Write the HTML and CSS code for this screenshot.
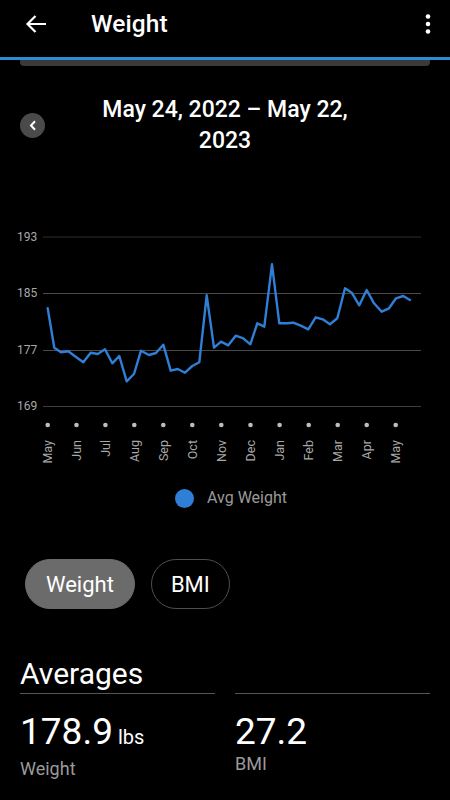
FILE: index.html
```html
<!DOCTYPE html>
<html lang="en">
<head>
<meta charset="utf-8">
<title>Weight</title>
<link rel="stylesheet" href="styles.css">
</head>
<body>
<header class="topbar">
  <svg class="back" width="22" height="20" viewBox="0 0 22 20"><path d="M21 10H2.5M10.5 2L2.5 10L10.5 18" fill="none" stroke="#fff" stroke-width="2.2" stroke-linecap="butt" stroke-linejoin="miter"/></svg>
  <h1 class="title">Weight</h1>
  <svg class="kebab" width="6" height="22" viewBox="0 0 6 22"><circle cx="3" cy="3.5" r="2.3" fill="#fff"/><circle cx="3" cy="11" r="2.3" fill="#fff"/><circle cx="3" cy="18.5" r="2.3" fill="#fff"/></svg>
</header>
<div class="accent"></div>
<div class="tabbar"></div>

<section class="range">
  <button class="prev" aria-label="Previous"><svg width="8" height="11" viewBox="0 0 8 11"><path d="M6 1.2L2 5.5L6 9.8" fill="none" stroke="#fff" stroke-width="2"/></svg></button>
  <div class="range-title">May 24, 2022 – May 22, 2023</div>
  <span></span>
</section>

<svg class="chart" width="450" height="250" viewBox="0 220 450 250">
  <g class="grid">
    <line x1="43" y1="237" x2="421" y2="237" stroke="#2c2c2c" stroke-width="1"/>
    <line x1="43" y1="293.5" x2="421" y2="293.5" stroke="#4a4a4a" stroke-width="1"/>
    <line x1="43" y1="350.5" x2="421" y2="350.5" stroke="#4a4a4a" stroke-width="1"/>
    <line x1="43" y1="406.5" x2="421" y2="406.5" stroke="#3e3e3e" stroke-width="1"/>
  </g>
  <g class="ylabels" font-family="Roboto, sans-serif" font-size="12" fill="#a8a8a8">
    <text x="17" y="241">193</text>
    <text x="17" y="297">185</text>
    <text x="17" y="354">177</text>
    <text x="17" y="410">169</text>
  </g>
  <polyline fill="none" stroke="#2f7fd6" stroke-width="2.4" stroke-linejoin="round" stroke-linecap="round"
    points="47.7,308.3 54.3,347.7 61,352.3 68.3,351.3 76,357 83.3,362.3 90.7,352.7 97.7,354 105,349.3 112.3,363.3 119.3,356 126.7,381.3 134,374 141,350.7 149,355 156,353 163.3,344.7 170.7,370.7 177.7,369 185,372.7 192.3,366 199.3,362.3 206.7,295.3 214,347.7 221,341.7 228.3,345.3 235.7,335.7 243.3,338.3 250.3,344.3 257.3,323.3 264.3,326.7 272,264.3 279.3,323.3 286.7,323.3 293.3,322.7 300.7,325.7 308.3,329.3 315.7,317.3 322.7,319.3 330,324.3 337.3,318.3 345,288.3 351.7,292.7 359.3,305.3 366.7,290 374,303.3 381.7,311.7 389,308.3 396,298.3 403.3,296 410,300"/>
  <g class="dots" fill="#bdbdbd">
    <circle cx="47.7" cy="425" r="2.3"/><circle cx="76.5" cy="425" r="2.3"/><circle cx="105.4" cy="425" r="2.3"/><circle cx="134.3" cy="425" r="2.3"/><circle cx="163.3" cy="425" r="2.3"/><circle cx="192.3" cy="425" r="2.3"/><circle cx="221.3" cy="425" r="2.3"/><circle cx="250.5" cy="425" r="2.3"/><circle cx="279.6" cy="425" r="2.3"/><circle cx="308.7" cy="425" r="2.3"/><circle cx="337.7" cy="425" r="2.3"/><circle cx="366.7" cy="425" r="2.3"/><circle cx="395.7" cy="425" r="2.3"/>
  </g>
  <g class="months" font-family="Roboto, sans-serif" font-size="12.5" fill="#a8a8a8" text-anchor="end">
    <text x="52" y="440" transform="rotate(-90 52 440)">May</text>
    <text x="80.8" y="440" transform="rotate(-90 80.8 440)">Jun</text>
    <text x="109.7" y="440" transform="rotate(-90 109.7 440)">Jul</text>
    <text x="138.6" y="440" transform="rotate(-90 138.6 440)">Aug</text>
    <text x="167.6" y="440" transform="rotate(-90 167.6 440)">Sep</text>
    <text x="196.6" y="440" transform="rotate(-90 196.6 440)">Oct</text>
    <text x="225.6" y="440" transform="rotate(-90 225.6 440)">Nov</text>
    <text x="254.8" y="440" transform="rotate(-90 254.8 440)">Dec</text>
    <text x="283.9" y="440" transform="rotate(-90 283.9 440)">Jan</text>
    <text x="313" y="440" transform="rotate(-90 313 440)">Feb</text>
    <text x="342" y="440" transform="rotate(-90 342 440)">Mar</text>
    <text x="371" y="440" transform="rotate(-90 371 440)">Apr</text>
    <text x="400" y="440" transform="rotate(-90 400 440)">May</text>
  </g>
</svg>

<div class="legend">
  <span class="legend-dot"></span>
  <span class="legend-label">Avg Weight</span>
</div>

<div class="pills">
  <button class="pill pill-active">Weight</button>
  <button class="pill">BMI</button>
</div>

<section class="averages">
  <h2 class="avg-heading">Averages</h2>
  <div class="avg-heading avg-heading-empty"></div>
  <div class="stat">
    <div class="stat-value">178.9<span class="unit">lbs</span></div>
    <div class="stat-label">Weight</div>
  </div>
  <div class="stat">
    <div class="stat-value">27.2</div>
    <div class="stat-label">BMI</div>
  </div>
</section>
</body>
</html>
```

FILE: styles.css
```css
* { box-sizing: border-box; }
html, body {
  margin: 0;
  padding: 0;
  background: #000;
  color: #fff;
  font-family: Roboto, "Noto Sans", sans-serif;
}
body { width: 450px; overflow: hidden; }

.topbar {
  height: 48px;
  margin-bottom: 9px;
  display: flex;
  align-items: center;
  padding: 0 25px;
}
.back { display: block; flex: none; }
.title {
  margin: 0 0 0 44px;
  font-size: 24.5px;
  font-weight: 500;
  line-height: 28px;
  flex: 1;
  letter-spacing: 0.1px;
}
.kebab { display: block; margin-right: -6px; }

.accent { height: 3px; background: #2a8fd2; }
.tabbar {
  height: 6px;
  margin: 0 20px;
  background: #3a3a3a;
  border-radius: 0 0 4px 4px;
}

.range {
  margin-top: 28px;
  padding: 0 20px;
  display: grid;
  grid-template-columns: 25px 1fr 25px;
  align-items: center;
}
.prev {
  width: 25px;
  height: 25px;
  border-radius: 50%;
  border: 0;
  padding: 0;
  background: #4a4a4a;
  display: flex;
  align-items: center;
  justify-content: center;
}
.prev svg { display: block; }
.range-title {
  justify-self: center;
  max-width: 280px;
  text-align: center;
  font-size: 23px;
  font-weight: 500;
  line-height: 31px;
}

.chart { display: block; margin-top: 64px; }

.legend {
  margin-top: 18px;
  height: 20px;
  display: flex;
  align-items: center;
  justify-content: center;
  padding-left: 12px;
  gap: 13px;
}
.legend-dot {
  width: 19px;
  height: 19px;
  border-radius: 50%;
  background: #2f7fd6;
}
.legend-label {
  font-size: 16px;
  color: #9a9a9a;
  line-height: 20px;
}

.pills {
  margin-top: 51px;
  padding: 0 25px;
  display: flex;
  gap: 16px;
}
.pill {
  height: 50px;
  border-radius: 25px;
  padding: 0 19px;
  font-family: Roboto, sans-serif;
  font-size: 22px;
  color: #fff;
  background: transparent;
  border: 1px solid #4e4e4e;
}
.pill-active {
  background: #6b6b6b;
  border-color: #6b6b6b;
  padding: 0 20px;
}

.averages {
  margin-top: 47px;
  padding: 0 20px;
  display: grid;
  grid-template-columns: 1fr 1fr;
  column-gap: 20px;
}
.avg-heading {
  margin: 0;
  font-size: 30px;
  font-weight: 400;
  line-height: 36px;
  padding-bottom: 1px;
  border-bottom: 1px solid #555;
}
.stat { margin-top: 16px; }
.stat-value {
  font-size: 37px;
  line-height: 44px;
  font-weight: 400;
}
.unit {
  font-size: 20px;
  margin-left: 5px;
}
.stat-label {
  margin-top: -2px;
  font-size: 18px;
  line-height: 24px;
  color: #9a9a9a;
}
```
